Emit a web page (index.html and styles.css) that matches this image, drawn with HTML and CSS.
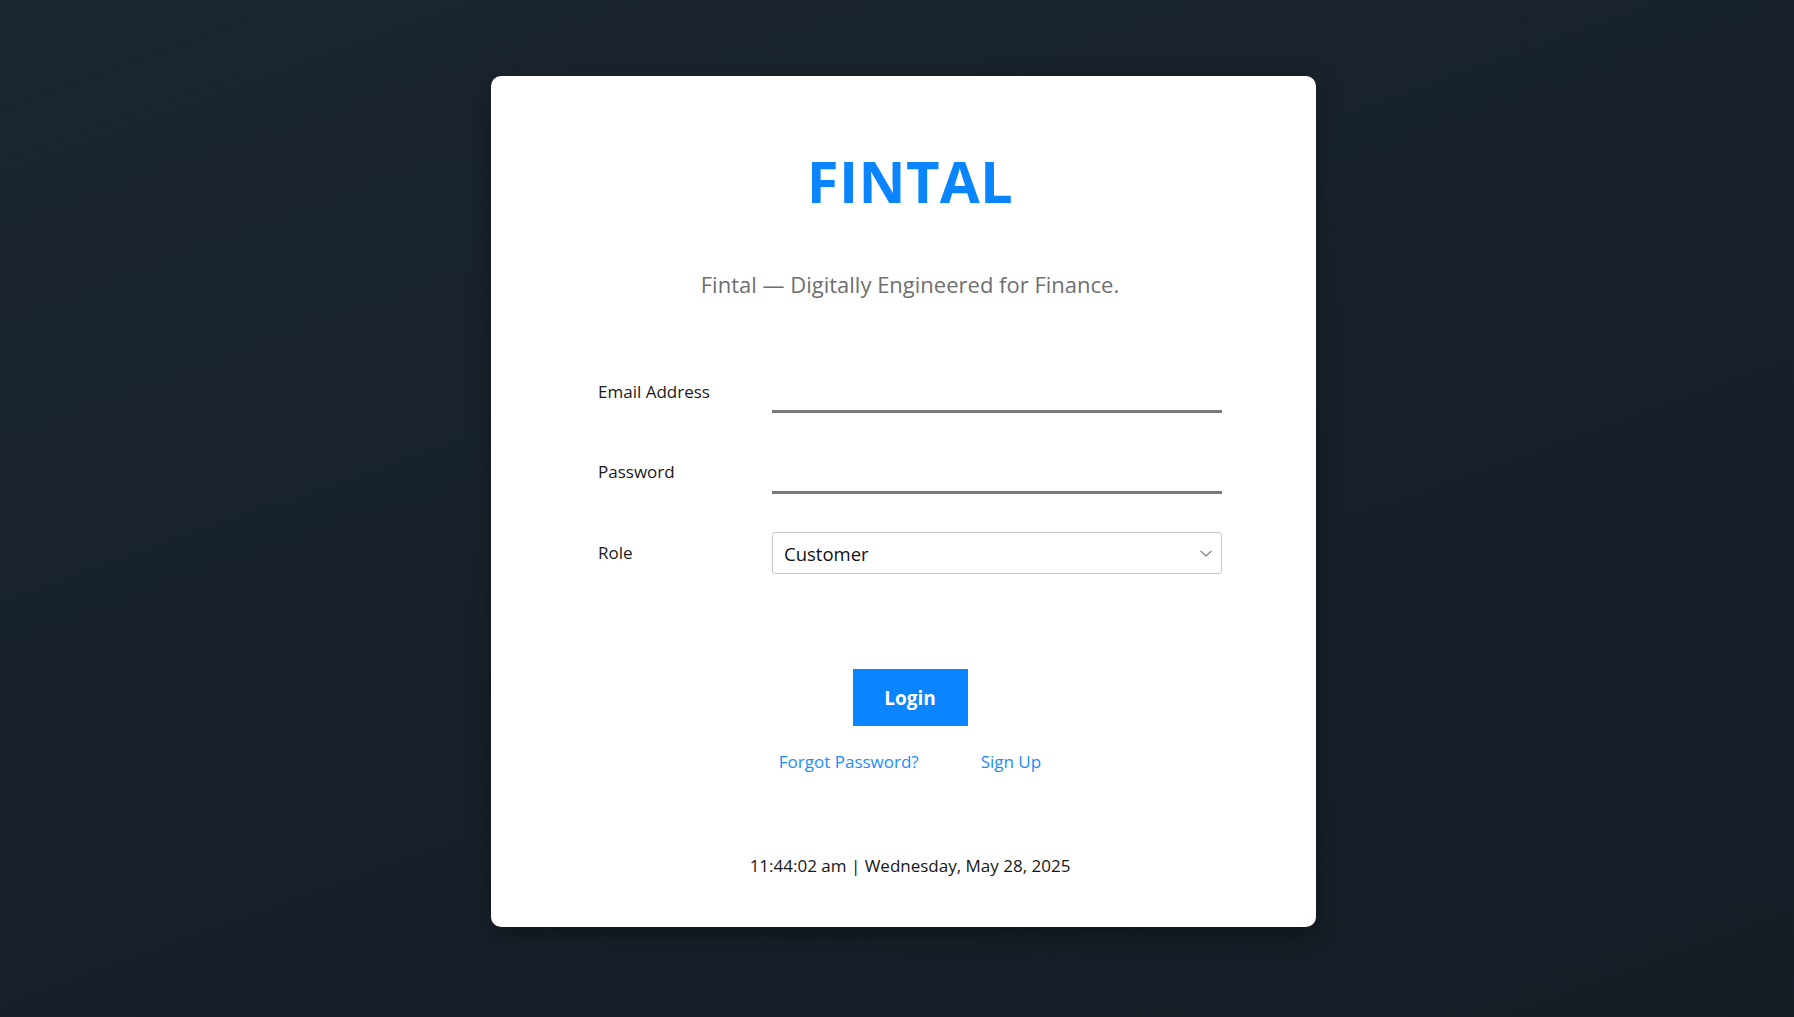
FILE: index.html
```html
<!DOCTYPE html>
<html lang="en">
<head>
<meta charset="utf-8">
<title>Fintal — Login</title>
<link rel="stylesheet" href="styles.css">
</head>
<body>
<main class="card">
  <h1 class="brand">FINTAL</h1>
  <p class="tagline">Fintal — Digitally Engineered for Finance.</p>
  <form class="form">
    <div class="row">
      <label class="label" for="email">Email Address</label>
      <input class="line-input" id="email" type="email">
    </div>
    <div class="row">
      <label class="label" for="pw">Password</label>
      <input class="line-input" id="pw" type="password">
    </div>
    <div class="row">
      <label class="label" for="role">Role</label>
      <div class="select-wrap">
        <select class="select" id="role">
          <option>Customer</option>
          <option>Admin</option>
        </select>
        <svg class="chevron" width="12" height="7" viewBox="0 0 12 7"><path d="M0.5 0.8 L6 6 L11.5 0.8" fill="none" stroke="#777" stroke-width="1.1"/></svg>
      </div>
    </div>
  </form>
  <div class="actions">
    <button class="login" type="button">Login</button>
  </div>
  <div class="links">
    <a class="link" href="#">Forgot Password?</a>
    <a class="link" href="#">Sign Up</a>
  </div>
  <p class="clock">11:44:02 am | Wednesday, May 28, 2025</p>
</main>
</body>
</html>
```
FILE: styles.css
```css
* { box-sizing: border-box; }
html, body { height: 100%; }
body {
  margin: 0;
  min-height: 100vh;
  display: flex;
  justify-content: center;
  align-items: center;
  padding: 0 0 14px 13px;
  background: linear-gradient(160deg, #1b2530 0%, #18212b 50%, #151d25 100%);
  font-family: "Open Sans", "Noto Sans", sans-serif;
}
.card {
  width: 825px;
  height: 851px;
  background: #fff;
  border-radius: 10px;
  padding: 70px 94px 0 107px;
  box-shadow: 0 8px 24px rgba(0, 0, 0, 0.35);
  display: flex;
  flex-direction: column;
}
.brand {
  margin: 0;
  text-align: center;
  font-size: 58px;
  line-height: 70px;
  font-weight: 700;
  color: #0a84ff;
  letter-spacing: 0.3px;
}
.tagline {
  margin: 54px 0 0;
  text-align: center;
  font-size: 22px;
  line-height: 28px;
  color: #6f6f6f;
}
.form {
  margin-top: 73px;
  display: flex;
  flex-direction: column;
  gap: 38.5px;
}
.row {
  display: grid;
  grid-template-columns: 174px 450px;
  align-items: center;
  height: 42px;
}
.label {
  font-size: 17px;
  line-height: 24px;
  color: #1a1a1a;
  margin-top: -1px;
}
.line-input {
  height: 42px;
  border: none;
  border-bottom: 3px solid #7a7a7a;
  background: transparent;
  outline: none;
  font: inherit;
}
.select-wrap {
  position: relative;
  height: 42px;
}
.select {
  appearance: none;
  -webkit-appearance: none;
  width: 100%;
  height: 42px;
  border: 1px solid #c8c8c8;
  border-radius: 3px;
  background: #fff;
  padding: 0 30px 0 11px;
  font-family: "Open Sans", "Noto Sans", sans-serif;
  font-size: 18.5px;
  color: #111;
}
.chevron {
  position: absolute;
  right: 10px;
  top: 18px;
  pointer-events: none;
}
.actions {
  margin-top: 95px;
  display: flex;
  justify-content: center;
}
.login {
  width: 115px;
  height: 57px;
  border: none;
  background: #0a84ff;
  color: #fff;
  font-family: "Open Sans", "Noto Sans", sans-serif;
  font-size: 19px;
  font-weight: 700;
  cursor: pointer;
}
.links {
  margin-top: 24px;
  display: flex;
  justify-content: center;
  gap: 62px;
  line-height: 24px;
}
.link {
  font-size: 17px;
  color: #1a8cff;
  text-decoration: none;
}
.clock {
  margin: 80px 0 0;
  text-align: center;
  font-size: 17px;
  line-height: 24px;
  color: #161616;
}
```
